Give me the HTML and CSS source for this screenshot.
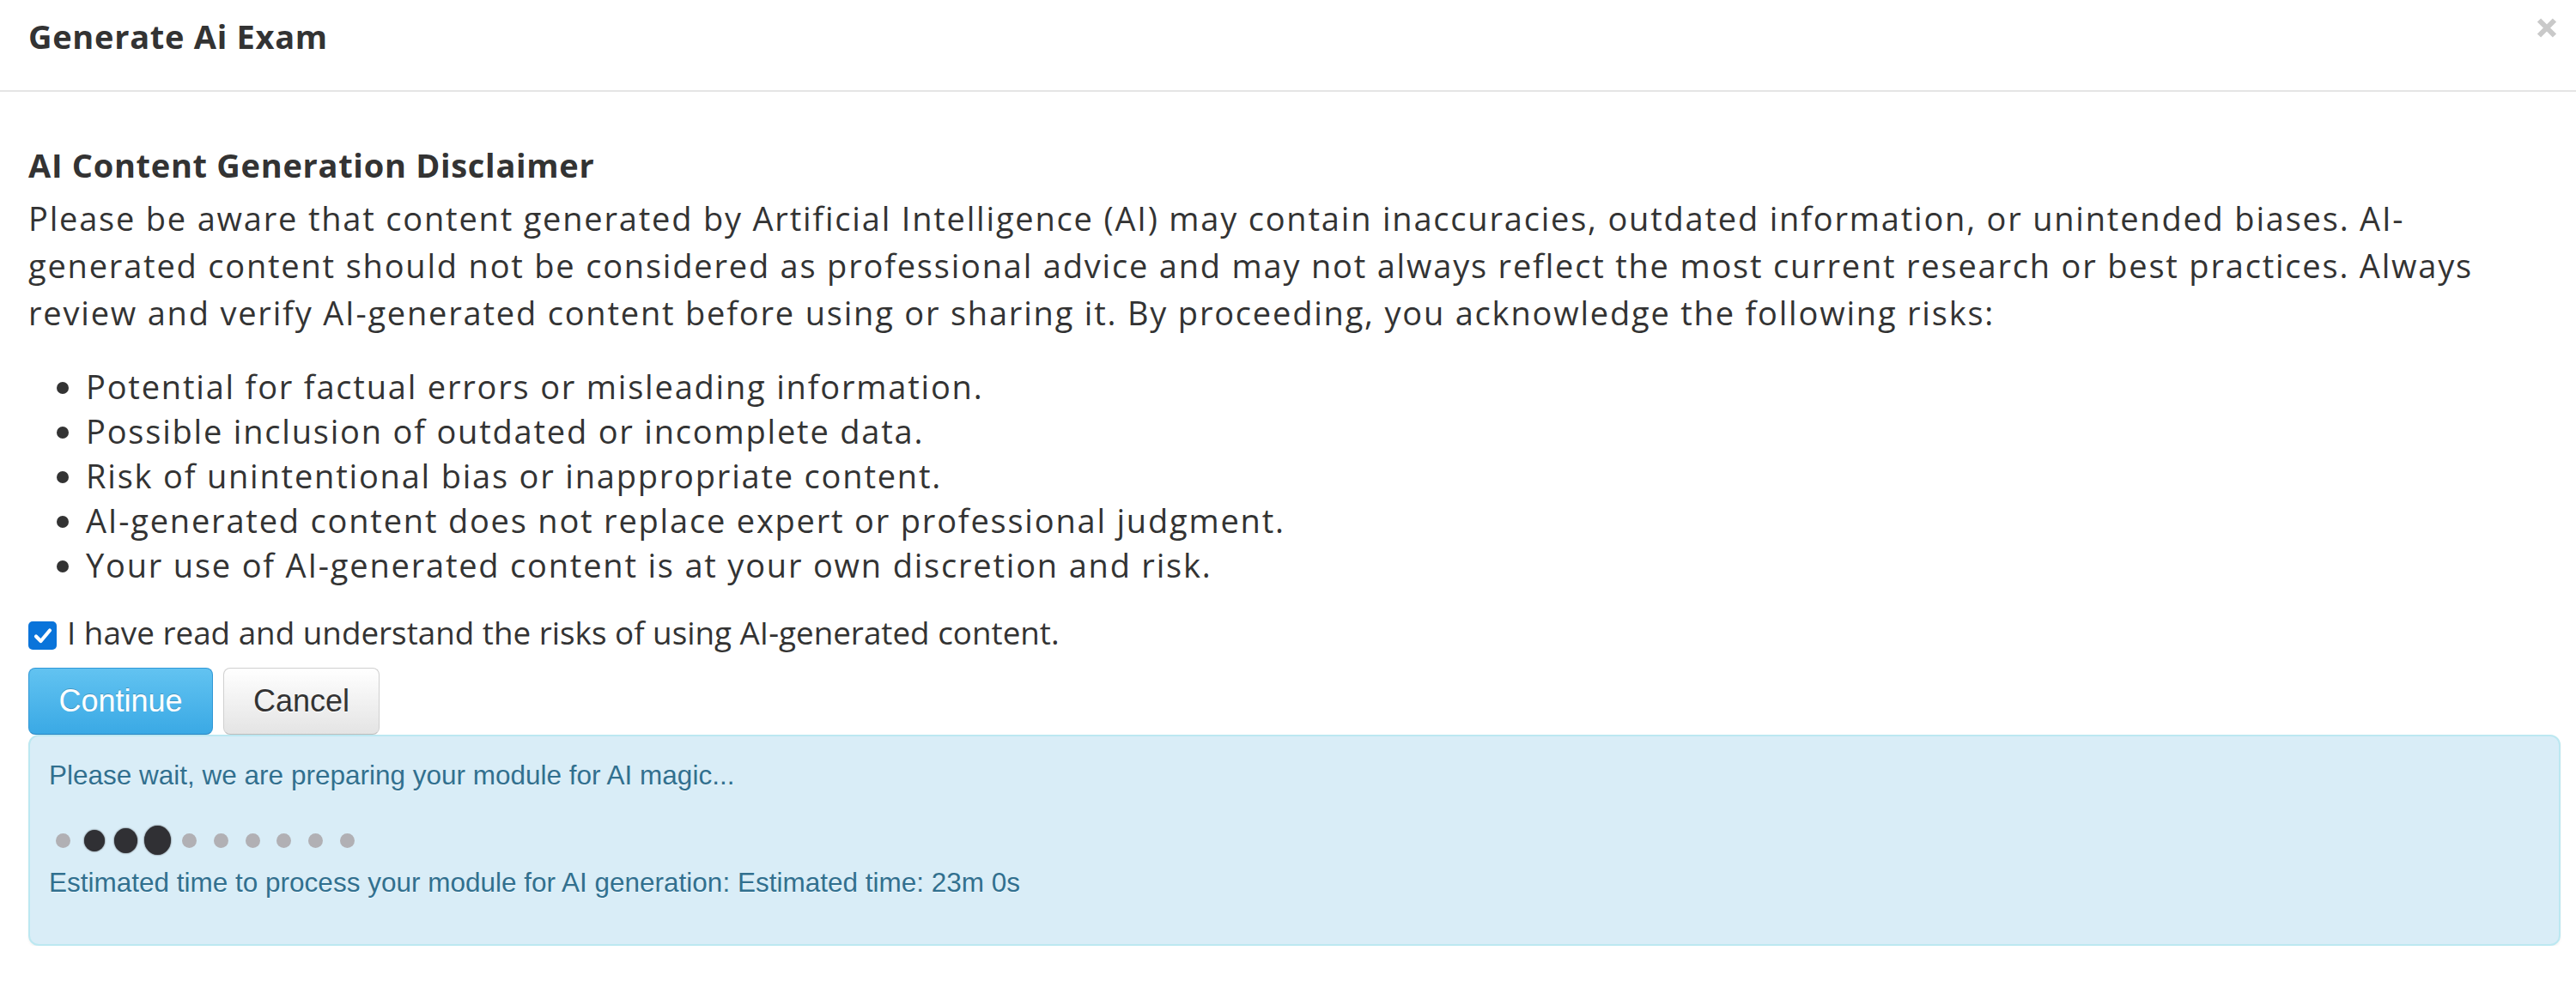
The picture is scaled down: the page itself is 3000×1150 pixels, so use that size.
FILE: index.html
```html
<!DOCTYPE html>
<html lang="en">
<head>
    <meta charset="UTF-8">
    <meta name="viewport" content="width=device-width, initial-scale=1.0">
    <title>Generate Ai Exam</title>
    <link rel="stylesheet" href="styles.css">
</head>
<body>
    <div class="modal">
        <div class="modal-header">
            <h4 class="modal-title">Generate Ai Exam</h4>
            <button class="close" type="button" aria-label="Close">
                <svg width="24" height="25" viewBox="0 0 24 25">
                    <path d="M3 3.5 L21 21.5 M21 3.5 L3 21.5" stroke="#c9c9c9" stroke-width="6" fill="none"/>
                </svg>
            </button>
        </div>

        <div class="modal-body">
            <h4 class="disclaimer-title">AI Content Generation Disclaimer</h4>
            <p class="disclaimer-text">Please be aware that content generated by Artificial Intelligence (AI) may contain inaccuracies, outdated information, or unintended biases. AI-generated content should not be considered as professional advice and may not always reflect the most current research or best practices. Always review and verify AI-generated content before using or sharing it. By proceeding, you acknowledge the following risks:</p>
            <ul class="risk-list">
                <li>Potential for factual errors or misleading information.</li>
                <li>Possible inclusion of outdated or incomplete data.</li>
                <li>Risk of unintentional bias or inappropriate content.</li>
                <li>AI-generated content does not replace expert or professional judgment.</li>
                <li>Your use of AI-generated content is at your own discretion and risk.</li>
            </ul>

            <label class="agree">
                <span class="check">
                    <svg width="22" height="20" viewBox="0 0 22 20">
                        <path d="M3 10.5 L8.5 16 L19 3.5" stroke="#fff" stroke-width="4.2" fill="none" stroke-linecap="round" stroke-linejoin="round"/>
                    </svg>
                </span>
                I have read and understand the risks of using AI-generated content.
            </label>

            <div class="btn-row">
                <button class="btn btn-info" type="button">Continue</button>
                <button class="btn btn-default" type="button">Cancel</button>
            </div>

            <div class="alert-info">
                <div class="alert-line">Please wait, we are preparing your module for AI magic...</div>
                <div class="dots">
                    <span class="dot"><i class="gray"></i></span>
                    <span class="dot"><i class="dark d1"></i></span>
                    <span class="dot"><i class="dark d2"></i></span>
                    <span class="dot"><i class="dark d3"></i></span>
                    <span class="dot"><i class="gray"></i></span>
                    <span class="dot"><i class="gray"></i></span>
                    <span class="dot"><i class="gray"></i></span>
                    <span class="dot"><i class="gray"></i></span>
                    <span class="dot"><i class="gray"></i></span>
                    <span class="dot"><i class="gray"></i></span>
                </div>
                <div class="alert-line">Estimated time to process your module for AI generation: Estimated time: 23m 0s</div>
            </div>
        </div>
    </div>
</body>
</html>
```

FILE: styles.css
```css
/* page */
body {
    margin: 0;
    background-color: #fff;
    font-family: "Open Sans", "Noto Sans", sans-serif;
    color: #333;
}

.modal {
    width: 3000px;
}

/* header */
.modal-header {
    display: flex;
    justify-content: space-between;
    align-items: flex-start;
    padding: 15px 22px 35px 33px;
    border-bottom: 2px solid #e5e5e5;
}

.modal-title {
    margin: 0;
    font-size: 38px;
    line-height: 55px;
    font-weight: 700;
    letter-spacing: 0.7px;
}

.close {
    margin-top: 5px;
    padding: 0;
    border: none;
    background: none;
    line-height: 0;
    cursor: pointer;
}

/* body */
.modal-body {
    padding: 58px 18px 0 33px;
}

.disclaimer-title {
    margin: 0 0 7px;
    font-size: 38px;
    line-height: 55px;
    font-weight: 700;
    letter-spacing: 0.7px;
}

.disclaimer-text {
    margin: 0 0 32px;
    font-size: 38px;
    line-height: 55px;
    letter-spacing: 1.8px;
}

.risk-list {
    margin: 0 0 27px;
    padding-left: 67px;
    font-size: 38px;
    line-height: 52px;
    letter-spacing: 1.8px;
}

/* checkbox row */
.agree {
    display: flex;
    align-items: center;
    gap: 12px;
    font-size: 36.8px;
    line-height: 52px;
}

.check {
    width: 33px;
    height: 33px;
    margin-top: 7px;
    border-radius: 5px;
    background-color: #0a74da;
    display: flex;
    align-items: center;
    justify-content: center;
}

/* buttons */
.btn-row {
    display: flex;
    gap: 12px;
    margin-top: 15px;
}

.btn {
    padding: 14px 33px;
    font-family: "Liberation Sans", Arial, sans-serif;
    font-size: 36px;
    line-height: 48px;
    border-radius: 8px;
    border: 1px solid;
    cursor: pointer;
}

.btn-info {
    width: 215px;
    color: #fff;
    background: linear-gradient(to bottom, #62c3f1 0%, #3aa9e5 100%);
    border-color: #3198d6;
    border-bottom-color: #2a86c2;
    text-shadow: 0 -1px 0 rgba(0, 0, 0, 0.2);
}

.btn-default {
    width: 182px;
    color: #333;
    background: linear-gradient(to bottom, #fff 0%, #e4e4e4 100%);
    border-color: #d0d0d0;
    border-bottom-color: #bcbcbc;
    text-shadow: 0 1px 0 #fff;
}

/* progress box */
.alert-info {
    padding: 24px 22px 50px 22px;
    background-color: #d9edf7;
    border: 2px solid #bce8f1;
    border-radius: 12px;
    box-shadow: 0 2px 3px rgba(0, 0, 0, 0.05);
    color: #31708f;
    font-family: "Liberation Sans", Arial, sans-serif;
    font-size: 31.5px;
    line-height: 43px;
    text-shadow: 0 1px 0 rgba(255, 255, 255, 0.5);
}

.dots {
    display: flex;
    align-items: center;
    height: 36px;
    margin: 36px 0 10px -2px;
}

.dot {
    width: 36.8px;
    display: flex;
    justify-content: center;
}

.dot i {
    display: block;
    border-radius: 50%;
}

.gray {
    width: 17px;
    height: 17px;
    background-color: #b1b0b4;
}

.dark {
    background-color: #303034;
    box-shadow: 0 0 2px #303034;
}

.d1 {
    width: 24px;
    height: 25px;
}

.d2 {
    width: 27px;
    height: 29px;
}

.d3 {
    width: 31px;
    height: 34px;
}
```
